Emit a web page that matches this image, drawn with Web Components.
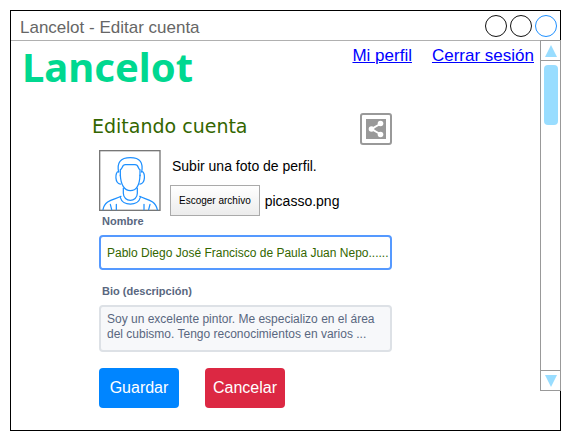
<!DOCTYPE html>
<html lang="es">
<head>
<meta charset="utf-8">
<title>Lancelot - Editar cuenta</title>
<style>
  body { margin: 0; background: #fff; font-family: "Liberation Sans", Arial, sans-serif; color: #000; }
</style>
</head>
<body>
<app-window heading="Lancelot - Editar cuenta">
  <site-header></site-header>
  <account-form></account-form>
</app-window>

<script>
const define = (name, html, setup) => {
  const template = document.createElement('template');
  template.innerHTML = html;
  customElements.define(name, class extends HTMLElement {
    constructor() {
      super();
      this.attachShadow({ mode: 'open' }).append(template.content.cloneNode(true));
    }
    connectedCallback() { if (setup) setup(this, this.shadowRoot); }
  });
};

define('app-window', `
  <style>
    :host { display: flex; flex-direction: column; box-sizing: border-box; margin: 10px; min-height: calc(100vh - 20px); border: 1px solid #000; }
    header { display: flex; align-items: center; justify-content: space-between; box-sizing: border-box; height: 30px; padding: 0 3px 0 9px; border-bottom: 1px solid #b0b0b0; }
    h1 { margin: 4px 0 0; font-size: 17px; line-height: 20px; font-weight: 400; color: #666; }
    .controls { display: flex; gap: 3px; }
    .controls button { box-sizing: border-box; width: 22px; height: 22px; padding: 0; border: 1px solid #111; border-radius: 50%; background: #fff; }
    .controls button:last-child { border-color: #1e90ff; }
    .body { display: flex; flex: 1; }
    main { flex: 1; min-width: 0; }
    window-scrollbar { margin: -1px -1px 39px 0; }
  </style>
  <header>
    <h1></h1>
    <div class="controls">
      <button type="button" aria-label="Minimizar"></button>
      <button type="button" aria-label="Maximizar"></button>
      <button type="button" aria-label="Cerrar"></button>
    </div>
  </header>
  <div class="body">
    <main><slot></slot></main>
    <window-scrollbar></window-scrollbar>
  </div>`, (host, root) => { root.querySelector('h1').textContent = host.getAttribute('heading'); });

define('window-scrollbar', `
  <style>
    :host { display: flex; flex-direction: column; box-sizing: border-box; width: 21px; border: 1px solid #999; background: #fff; }
    button { display: grid; place-items: center; box-sizing: border-box; height: 20px; padding: 0; border: 0 solid #999; background: #fff; }
    .up { border-bottom-width: 1px; }
    .down { border-top-width: 1px; }
    .track { flex: 1; padding: 4px 3px; }
    .thumb { width: 14px; height: 60px; border-radius: 4px; background: #99ddff; }
    svg { display: block; }
  </style>
  <button class="up" type="button" aria-label="Subir"><svg width="12" height="12" viewBox="0 0 12 12"><path d="M6 0L12 12H0Z" fill="#99ddff"/></svg></button>
  <div class="track"><div class="thumb"></div></div>
  <button class="down" type="button" aria-label="Bajar"><svg width="12" height="12" viewBox="0 0 12 12"><path d="M0 0H12L6 12Z" fill="#99ddff"/></svg></button>`);

define('site-header', `
  <style>
    :host { display: flex; justify-content: space-between; align-items: flex-start; padding: 0 6px 0 11px; }
    .logo { font: 700 40px/52px "Noto Sans", "Open Sans", sans-serif; color: #00d890; }
    nav { display: flex; gap: 20px; padding-top: 5px; }
    a { font-size: 17px; line-height: 20px; color: #0000ff; text-decoration: underline; white-space: nowrap; }
  </style>
  <div class="logo">Lancelot</div>
  <nav><a href="#perfil">Mi perfil</a><a href="#salir">Cerrar sesión</a></nav>`);

define('user-avatar', `
  <style>
    :host { display: block; width: 62px; height: 61px; }
    svg { display: block; width: 100%; height: 100%; }
  </style>
  <svg viewBox="12 15 186 183" role="img" aria-label="Foto de perfil">
    <rect x="14" y="17" width="181" height="179" fill="#fff" stroke="#777" stroke-width="4"/>
    <g fill="none" stroke="#1e90ff" stroke-width="3.700" stroke-linecap="round" stroke-linejoin="round">
      <path d="M71 81C65 53 76 38 106 38S145 53 140 81"/>
      <path d="M76 92V74C83 72 80 59 91 59H120C132 59 128 72 135 74V92"/>
      <path d="M76 90C77 118 88 137 106 137S134 118 135 90"/>
      <path d="M71 80C59 78 59 119 77 117M140 80C152 78 152 119 134 117"/>
      <path d="M85 129V145C85 173 127 173 127 145V129"/>
      <path d="M78 154C62 164 29 162 24 194M134 154C150 164 181 162 187 194"/>
      <path d="M76 157C82 184 130 184 136 157"/>
      <path d="M46 178L50 194M64 178V194M165 178L161 194M147 178V194"/>
    </g>
  </svg>`);

define('share-button', `
  <style>
    :host { display: block; }
    button { display: grid; place-items: center; box-sizing: border-box; width: 32px; height: 32px; padding: 0; border: 2px solid #999; border-radius: 3px; background: #fff; }
    svg { display: block; }
  </style>
  <button type="button" aria-label="Compartir">
    <svg width="22" height="22" viewBox="0 0 22 22"><rect x="1" y="1" width="20" height="20" fill="#999"/><path d="M16 5.500L6.500 11L16 16.500" fill="none" stroke="#fff" stroke-width="2"/><g fill="#fff"><circle cx="15.500" cy="5.500" r="2.800"/><circle cx="6.500" cy="11" r="2.800"/><circle cx="15.500" cy="16.500" r="2.800"/></g></svg>
  </button>`);

define('account-form', `
  <style>
    :host { display: block; margin: 20px 148px 0 88px; }
    .top { display: flex; justify-content: space-between; margin-left: -7px; }
    h2 { margin: 0; font: 400 19px/26px "DejaVu Sans", Verdana, sans-serif; color: #336600; }
    .photo { display: flex; gap: 10px; margin-top: 5px; }
    .upload p { margin: 7px 0 10px; font-size: 14px; line-height: 18px; padding-left: 1px; }
    .picker { display: flex; align-items: center; gap: 5px; margin-left: -1px; font-size: 14px; }
    .picker button { box-sizing: border-box; height: 31px; padding: 0 8px; border: 1px solid #aaa; background: linear-gradient(#fff, #ececec); font: 10px/12px "Liberation Sans", Arial, sans-serif; color: #000; white-space: nowrap; }
    label { display: block; margin-left: 3px; font-size: 11px; line-height: 10px; font-weight: 700; color: #596780; }
    input, textarea { display: block; box-sizing: border-box; width: 100%; margin: 0; border-radius: 4px; font: 12px/15px "Liberation Sans", Arial, sans-serif; outline: 0; }
    input { height: 35px; margin: 9px 0 16px; padding: 0 0 0 6px; border: 2px solid #5599ff; background: #fff; color: #336600; }
    textarea { height: 47px; margin: 9px 0 16px; padding: 5px 6px; border: 2px solid #dde1e6; background: #f7f8fa; color: #596780; resize: none; overflow: hidden; }
    .actions { display: flex; gap: 26px; }
    .actions button { min-width: 80px; height: 40px; padding: 0; border: 0; border-radius: 4px; font: 16px/20px "Liberation Sans", Arial, sans-serif; color: #fff; }
    .save { background: #0085ff; }
    .cancel { background: #dc2843; }
  </style>
  <form>
    <div class="top"><h2>Editando cuenta</h2><share-button></share-button></div>
    <div class="photo">
      <user-avatar></user-avatar>
      <div class="upload">
        <p>Subir una foto de perfil.</p>
        <div class="picker"><button type="button">Escoger archivo</button><span>picasso.png</span></div>
      </div>
    </div>
    <label for="name">Nombre</label>
    <input id="name" type="text" value="Pablo Diego José Francisco de Paula Juan Nepo......">
    <label for="bio">Bio (descripción)</label>
    <textarea id="bio">Soy un excelente pintor. Me especializo en el área del cubismo. Tengo reconocimientos en varios ...</textarea>
    <div class="actions"><button class="save" type="button">Guardar</button><button class="cancel" type="button">Cancelar</button></div>
  </form>`);
</script>
</body>
</html>
